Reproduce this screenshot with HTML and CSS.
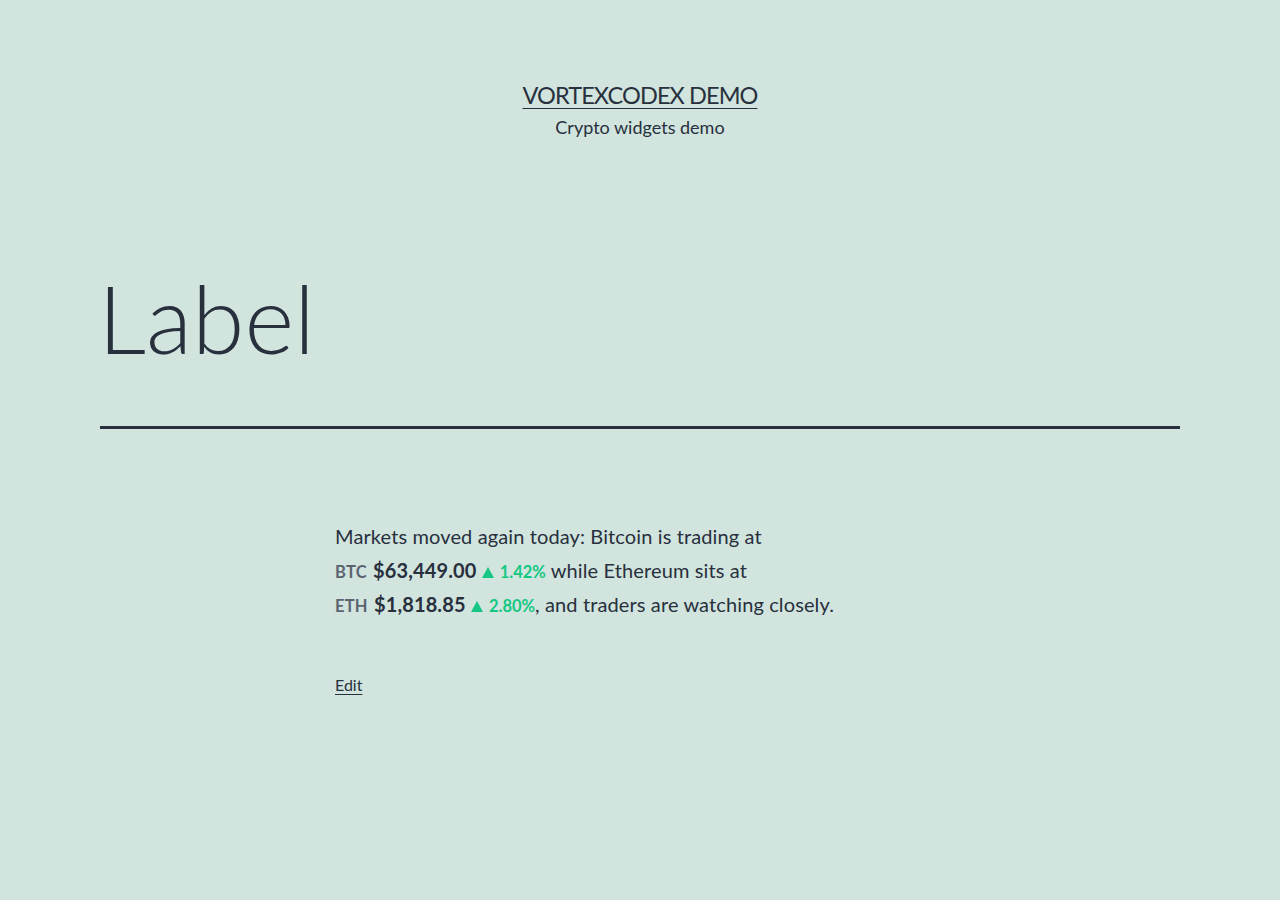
FILE: index.html
```html
<!DOCTYPE html>
<html lang="en">
<head>
<meta charset="utf-8">
<title>Label – VORTEXCODEX DEMO</title>
<link rel="stylesheet" href="styles.css">
</head>
<body>
<header class="site-header">
  <a class="site-title" href="#">VORTEXCODEX DEMO</a>
  <p class="site-description">Crypto widgets demo</p>
</header>
<main class="site-main">
  <header class="entry-header">
    <h1 class="entry-title">Label</h1>
  </header>
  <div class="entry-content">
    <p>Markets moved again today: Bitcoin is trading at<br>
      <span class="ticker">BTC</span> <span class="price">$63,449.00</span> <span class="change"><svg class="arrow" viewBox="0 0 12 11" width="12" height="11" aria-hidden="true"><polygon points="6,0 12,11 0,11" fill="currentColor"/></svg> 1.42%</span> while Ethereum sits at<br>
      <span class="ticker">ETH</span> <span class="price">$1,818.85</span> <span class="change"><svg class="arrow" viewBox="0 0 12 11" width="12" height="11" aria-hidden="true"><polygon points="6,0 12,11 0,11" fill="currentColor"/></svg> 2.80%</span>, and traders are watching closely.</p>
  </div>
  <footer class="entry-footer">
    <a class="edit-link" href="#">Edit</a>
  </footer>
</main>
</body>
</html>
```
FILE: styles.css
```css
html, body {
  margin: 0;
  padding: 0;
}
body {
  background: #d1e4dd;
  color: #28303d;
  font-family: Lato, "Noto Sans", sans-serif;
  min-height: 900px;
}
a {
  color: #28303d;
}
.site-header {
  display: flex;
  flex-direction: column;
  align-items: center;
  padding-top: 80px;
}
.site-title {
  font-size: 23.5px;
  line-height: 31px;
  letter-spacing: -0.9px;
  text-transform: uppercase;
  text-decoration: underline;
  text-underline-offset: 4px;
  text-decoration-thickness: 1px;
}
.site-description {
  margin: 4px 0 0;
  font-size: 18px;
  line-height: 25px;
}
.site-main {
  width: 1080px;
  margin: 0 auto;
}
.entry-header {
  margin-top: 124px;
  border-bottom: 3px solid #28303d;
  padding-bottom: 56px;
}
.entry-title {
  margin: 0;
  font-size: 95px;
  font-weight: 300;
  line-height: 106px;
  margin-left: -2px;
}
.entry-content {
  width: 610px;
  margin: 90px auto 0;
}
.entry-content p {
  margin: 0;
  font-size: 20px;
  line-height: 34px;
  letter-spacing: 0.12px;
}
.ticker {
  font-size: 16.5px;
  line-height: 1;
  font-weight: 700;
  color: #5b6370;
  letter-spacing: 0.2px;
}
.price {
  font-weight: 700;
  margin-left: 1px;
}
.change {
  font-size: 16.5px;
  line-height: 1;
  font-weight: 700;
  color: #16c784;
  letter-spacing: 0;
}
.arrow {
  vertical-align: 0;
  margin-right: 2px;
}
.entry-footer {
  width: 610px;
  margin: 52px auto 0;
}
.edit-link {
  font-size: 16px;
  line-height: 24px;
  text-decoration: underline;
  text-underline-offset: 3px;
}
```
